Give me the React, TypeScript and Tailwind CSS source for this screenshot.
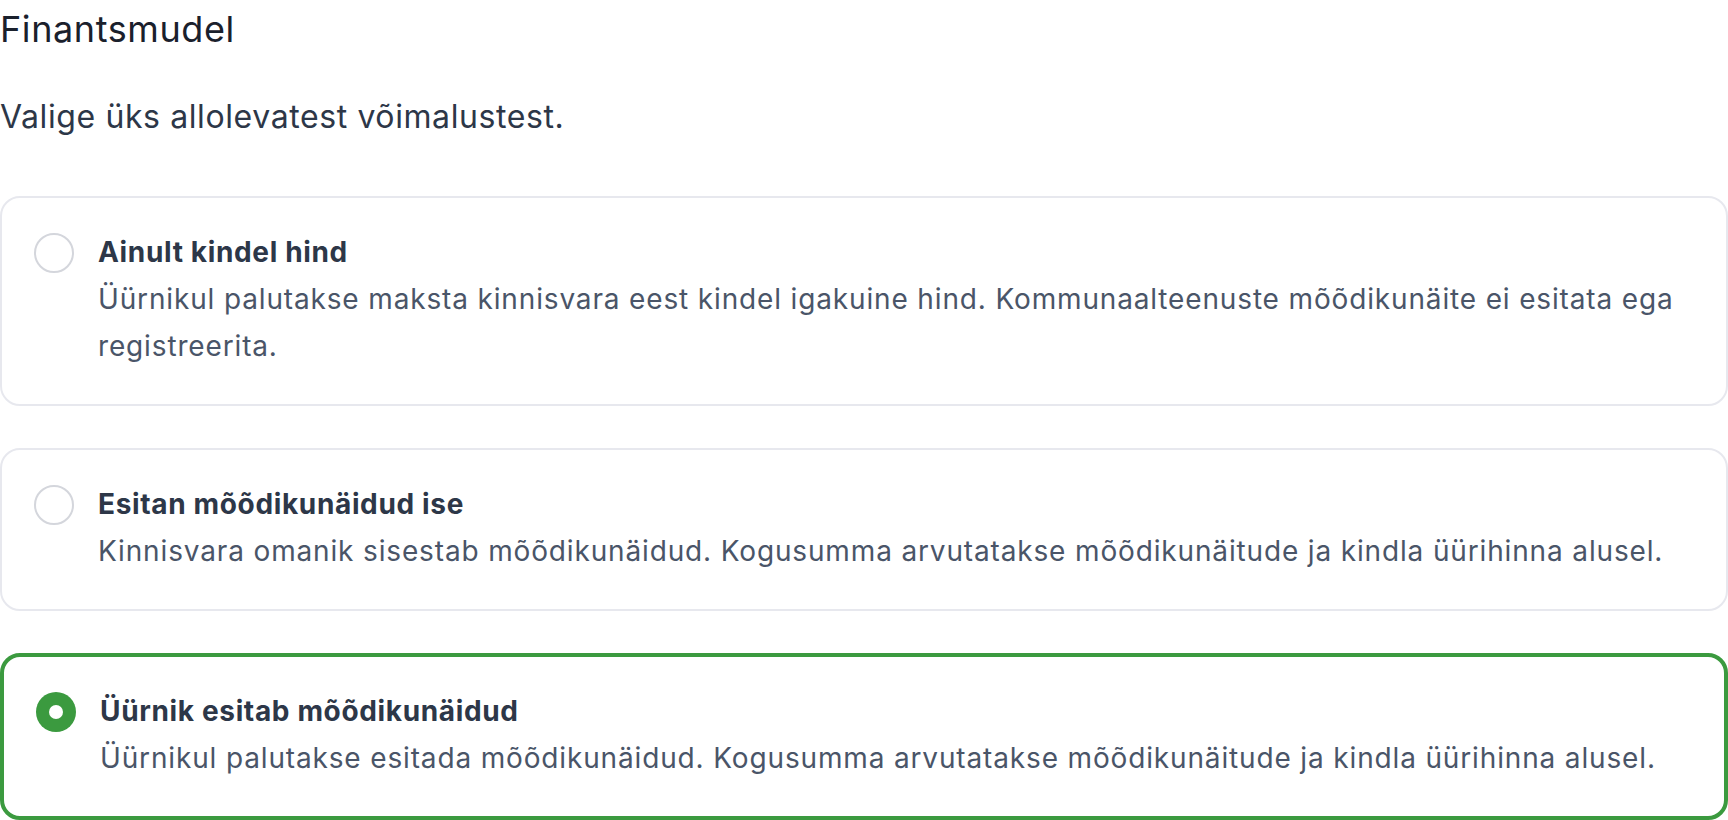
import { useState } from "react";

const options = [
  {
    id: "fixed",
    title: "Ainult kindel hind",
    desc: "Üürnikul palutakse maksta kinnisvara eest kindel igakuine hind. Kommunaalteenuste mõõdikunäite ei esitata ega registreerita.",
  },
  {
    id: "owner",
    title: "Esitan mõõdikunäidud ise",
    desc: "Kinnisvara omanik sisestab mõõdikunäidud. Kogusumma arvutatakse mõõdikunäitude ja kindla üürihinna alusel.",
  },
  {
    id: "tenant",
    title: "Üürnik esitab mõõdikunäidud",
    desc: "Üürnikul palutakse esitada mõõdikunäidud. Kogusumma arvutatakse mõõdikunäitude ja kindla üürihinna alusel.",
  },
];

const App = () => {
  const [selected, setSelected] = useState("tenant");
  return (
    <div className="w-[1728px] min-h-[820px] bg-white font-['Inter',sans-serif]">
      <h2 className="text-[36px] leading-[58px] tracking-[0.6px] text-[#1a202c]">Finantsmudel</h2>
      <p className="mt-[35px] text-[32px] leading-[48px] tracking-[0.6px] text-[#2d3748]">
        Valige üks allolevatest võimalustest.
      </p>
      <div role="radiogroup" className="mt-[55px] flex flex-col gap-[42px]">
        {options.map((o) => {
          const active = o.id === selected;
          return (
            <div
              key={o.id}
              role="radio"
              aria-checked={active}
              onClick={() => setSelected(o.id)}
              className={`flex items-start gap-6 rounded-[20px] bg-white pl-8 pr-8 pt-[31px] pb-[34px] cursor-pointer ${
                active ? "border-4 border-[#3b9a3f]" : "border-2 border-[#e7e8ee]"
              }`}
            >
              <span
                className={`mt-[3.5px] flex h-10 w-10 shrink-0 items-center justify-center rounded-full ${
                  active ? "bg-[#3b9a3f]" : "border-2 border-[#d4d6dc]"
                }`}
              >
                {active && <span className="h-[14px] w-[14px] rounded-full bg-white" />}
              </span>
              <div className="leading-[47px]">
                <div className="text-[28px] font-bold tracking-[0.65px] text-[#2d3748]">{o.title}</div>
                <div className="text-[28px] tracking-[0.85px] text-[#4a5568]">{o.desc}</div>
              </div>
            </div>
          );
        })}
      </div>
    </div>
  );
};

export default App;
